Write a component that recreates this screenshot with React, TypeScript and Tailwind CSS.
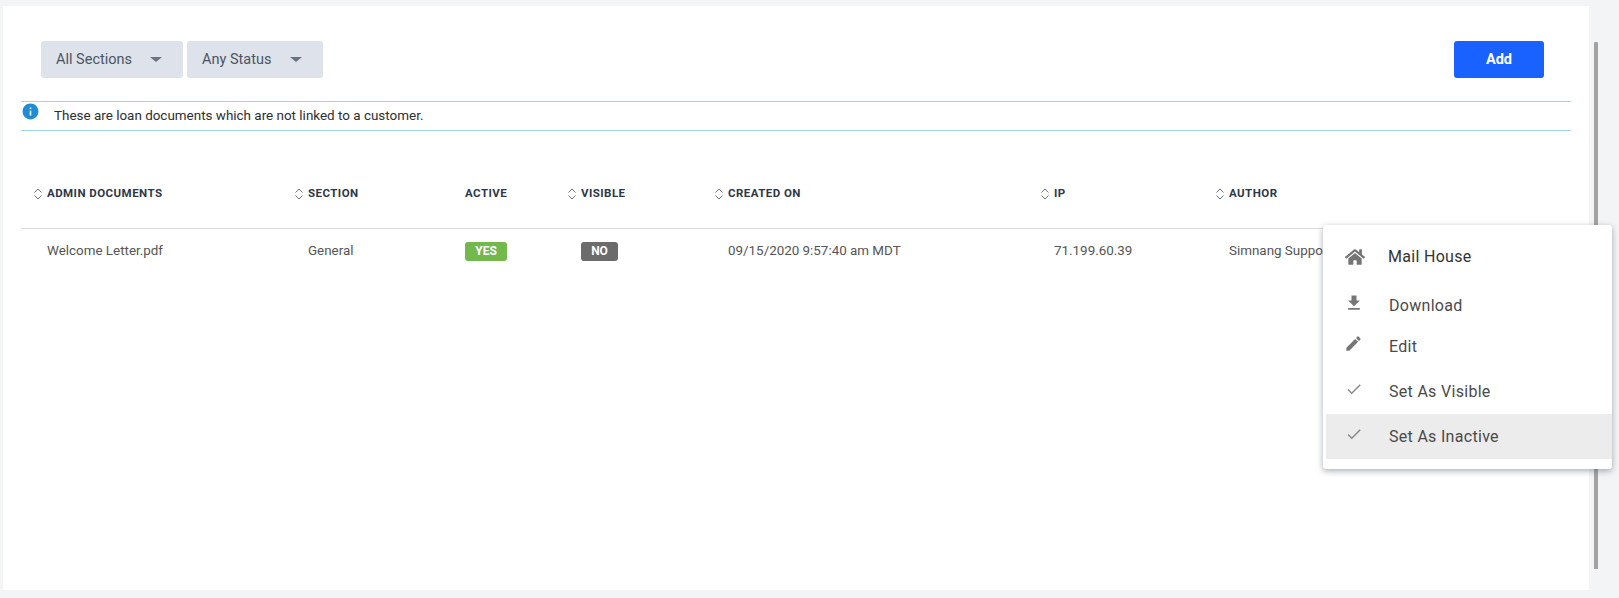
import { FaHome } from 'react-icons/fa';
import { MdFileDownload, MdEdit, MdCheck, MdInfo } from 'react-icons/md';

const COLUMNS = [
  { label: 'Admin Documents', sortable: true },
  { label: 'Section', sortable: true },
  { label: 'Active', sortable: false },
  { label: 'Visible', sortable: true },
  { label: 'Created On', sortable: true },
  { label: 'IP', sortable: true },
  { label: 'Author', sortable: true },
];

const GRID = 'grid grid-cols-[261px_171px_102px_147px_326px_175px_1fr]';

function SortIcon() {
  return (
    <svg width="10" height="14" viewBox="0 0 10 14" fill="none" stroke="#6b7280" strokeWidth="1" className="mr-[4px] shrink-0">
      <path d="M1.5 5.5 5 2l3.5 3.5" />
      <path d="M1.5 8.5 5 12l3.5-3.5" />
    </svg>
  );
}

function FilterButton({ label, width }: { label: string; width: string }) {
  return (
    <button className={`flex h-[37px] ${width} items-center justify-between rounded-[3px] bg-[#dee2eb] pl-[15px] pr-[21px] text-[14.5px] text-[#4b5563]`}>
      <span>{label}</span>
      <span className="h-0 w-0 border-x-[6px] border-t-[5px] border-x-transparent border-t-[#6b7280]" />
    </button>
  );
}

function MenuItem({ icon, label, className = '', iconWidth = 'w-[45px]' }: { icon: React.ReactNode; label: string; className?: string; iconWidth?: string }) {
  return (
    <div className={`flex items-center pl-[18px] text-[16px] tracking-[0.3px] text-[#4a4a4a] ${className}`}>
      <span className={`flex ${iconWidth} text-[#757575]`}>{icon}</span>
      <span>{label}</span>
    </div>
  );
}

export default function App() {
  return (
    <div className="relative flex h-screen overflow-hidden bg-[#f3f4f6] pb-[8px] pl-[3px] pt-[6px] font-['Roboto',sans-serif]">
      <div className="w-[1586px] bg-white pl-[18px]">
        <div className="flex items-start justify-between pl-[20px] pr-[45px] pt-[35px]">
          <div className="flex gap-[4px]">
            <FilterButton label="All Sections" width="w-[142px]" />
            <FilterButton label="Any Status" width="w-[136px]" />
          </div>
          <button className="h-[37px] w-[90px] rounded-[3px] bg-[#1a62ff] text-[14.5px] font-bold text-white">Add</button>
        </div>

        <div className="mt-[23px] flex h-[30px] w-[1550px] border-y border-[#a3d4ec] text-[13.45px] text-[#2f2f2f]">
          <MdInfo className="mt-[0px] text-[#1f8dd6]" size={19} />
          <span className="ml-[14px] mt-[4px]">These are loan documents which are not linked to a customer.</span>
        </div>

        <div className="mt-[30px] w-[1551px]">
          <div className={`${GRID} h-[68px] items-center border-b border-[#d9dcdf] pb-[2px]`}>
            {COLUMNS.map((col) => (
              <div key={col.label} className="flex items-center pl-[12px] text-[11.5px] font-bold uppercase tracking-[0.45px] text-[#2d3748]">
                {col.sortable && <SortIcon />}
                <span>{col.label}</span>
              </div>
            ))}
          </div>
          <div className={`${GRID} h-[45px] items-center text-[13.4px] text-[#555]`}>
            <div className="pl-[26px]">Welcome Letter.pdf</div>
            <div className="pl-[26px]">General</div>
            <div className="pl-[12px]">
              <span className="inline-block h-[19px] w-[42px] rounded-[3px] bg-[#72b84c] text-center text-[12px] font-bold leading-[19px] text-white">YES</span>
            </div>
            <div className="pl-[26px]">
              <span className="inline-block h-[19px] w-[37px] rounded-[3px] bg-[#6b6b6b] text-center text-[12px] font-bold leading-[19px] text-white">NO</span>
            </div>
            <div className="pl-[26px]">09/15/2020 9:57:40 am MDT</div>
            <div className="pl-[26px]">71.199.60.39</div>
            <div className="pl-[26px]">Simnang Support</div>
          </div>
        </div>
      </div>

      <div className="ml-[5px] mt-[36px] mb-[21px] w-[4px] rounded-t-[1px] bg-[#a3a3a3]" />

      <div className="absolute left-[1323px] top-[225px] h-[244px] w-[289px] rounded-[3px] bg-white pl-[3px] pt-[9px] shadow-[0_2px_6px_rgba(60,70,90,0.45)]">
        <MenuItem className="h-[46px] text-[#333]" iconWidth="w-[44px]" icon={<FaHome size={20} className="ml-[1px]" />} label="Mail House" />
        <MenuItem className="mt-[6px] h-[40px]" icon={<MdFileDownload size={20} className="mt-[-6px]" />} label="Download" />
        <MenuItem className="h-[41px]" icon={<MdEdit size={19} className="mt-[-6px]" />} label="Edit" />
        <MenuItem className="mt-[2px] h-[45px]" icon={<MdCheck size={18} className="ml-[1px] mt-[-5px] text-[#8a8a8a]" />} label="Set As Visible" />
        <MenuItem className="h-[45px] bg-[#ececec]" icon={<MdCheck size={18} className="ml-[1px] mt-[-5px] text-[#8a8a8a]" />} label="Set As Inactive" />
      </div>
    </div>
  );
}
